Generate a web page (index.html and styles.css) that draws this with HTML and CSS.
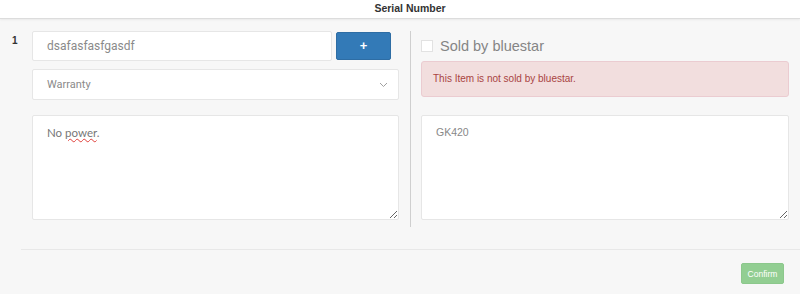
FILE: index.html
```html
<!DOCTYPE html>
<html lang="en">
<head>
    <meta charset="UTF-8">
    <title>Serial Number</title>
    <link rel="stylesheet" href="styles.css">
</head>
<body>

<div class="modal-header">Serial Number</div>

<div class="modal-body">
    <div class="item-no">1</div>

    <div class="col-left">
        <div class="serial-row">
            <div class="field serial-input">dsafasfasfgasdf</div>
            <button class="btn-add">+</button>
        </div>
        <div class="field select-box">
            <span>Warranty</span>
            <svg class="chevron" width="9" height="6" viewBox="0 0 9 6"><path d="M1 1 L4.5 4.5 L8 1" fill="none" stroke="#a0a0a0" stroke-width="1"/></svg>
        </div>
        <div class="field textbox notes">No <span class="typo">power</span>.</div>
    </div>

    <div class="col-right">
        <div class="check-row">
            <span class="checkbox"></span>
            <span class="check-label">Sold by bluestar</span>
        </div>
        <div class="alert">This Item is not sold by bluestar.</div>
        <div class="field textbox model">GK420</div>
    </div>
</div>

<div class="modal-footer">
    <button class="btn-confirm" disabled>Confirm</button>
</div>

</body>
</html>
```

FILE: styles.css
```css
body {
    margin: 0;
    height: 294px;
    background-color: #f7f7f7;
    font-family: "Liberation Sans", Arial, sans-serif;
    color: #333;
    overflow: hidden;
}
.modal-header {
    height: 18px;
    line-height: 17px;
    padding-left: 20px;
    background-color: #fff;
    border-bottom: 1px solid #dcdcdc;
    box-shadow: 0 1px 2px rgba(0, 0, 0, 0.06);
    text-align: center;
    font-size: 10.5px;
    font-weight: bold;
}
.modal-body {
    display: flex;
    padding-top: 12px;
}
.item-no {
    width: 32px;
    box-sizing: border-box;
    padding-left: 12px;
    padding-top: 4px;
    font-size: 10px;
    font-weight: bold;
}
.col-left {
    width: 367px;
    padding-bottom: 7px;
}
.col-right {
    width: 368px;
    margin-left: 11px;
    padding-left: 10px;
    padding-bottom: 7px;
    border-left: 1px solid #cfcfcf;
}
.field {
    box-sizing: border-box;
    background-color: #fff;
    border: 1px solid #e6e6e6;
    border-radius: 2px;
    padding-left: 14px;
    font-family: Roboto, "Liberation Sans", sans-serif;
    font-size: 12px;
    color: #8a8a8a;
}
.serial-row {
    display: flex;
    align-items: center;
    gap: 4px;
}
.serial-input {
    width: 300px;
    height: 30px;
    line-height: 28px;
}
.btn-add {
    width: 55px;
    height: 28px;
    padding: 0;
    background-color: #337ab7;
    border: 1px solid #2e6da4;
    border-radius: 2px;
    color: #fff;
    font-family: "Liberation Sans", Arial, sans-serif;
    font-size: 13px;
    font-weight: bold;
    line-height: 24px;
}
.select-box {
    display: flex;
    align-items: center;
    justify-content: space-between;
    height: 31px;
    margin-top: 8px;
    padding-right: 10px;
    font-size: 11px;
}
.textbox {
    height: 105px;
    padding-top: 10px;
    resize: vertical;
    overflow: auto;
}
.notes {
    margin-top: 15px;
    font-family: Lato, "Liberation Sans", sans-serif;
    font-size: 11.5px;
    color: #777;
}
.typo {
    text-decoration: underline wavy #e0403a;
    text-decoration-thickness: 1px;
}
.model {
    margin-top: 18px;
    font-family: "Liberation Sans", Arial, sans-serif;
    font-size: 10.5px;
    color: #888;
}
.check-row {
    display: flex;
    align-items: center;
    gap: 7px;
    height: 30px;
}
.checkbox {
    width: 12px;
    height: 12px;
    box-sizing: border-box;
    background-color: #fff;
    border: 1px solid #e2e2e2;
}
.check-label {
    font-size: 14.5px;
    color: #858585;
}
.alert {
    height: 36px;
    box-sizing: border-box;
    line-height: 34px;
    padding-left: 11px;
    background-color: #f2dede;
    border: 1px solid #ebccd1;
    border-radius: 3px;
    color: #a94442;
    font-size: 10px;
}
.modal-footer {
    display: flex;
    justify-content: flex-end;
    margin-top: 22px;
    margin-left: 21px;
    padding-top: 13px;
    padding-right: 16px;
    border-top: 1px solid #e8e8e8;
}
.btn-confirm {
    width: 43px;
    height: 21px;
    padding: 0;
    background-color: #92ce92;
    border: 1px solid #8cc88c;
    border-radius: 2px;
    color: #fff;
    font-family: "Liberation Sans", Arial, sans-serif;
    font-size: 8.5px;
}
```
